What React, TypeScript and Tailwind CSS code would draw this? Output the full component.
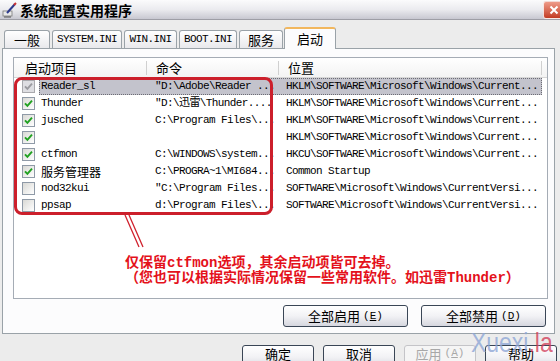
import React from 'react';

type Row = { name: string; cmd: string; loc: string; checked: boolean; selected?: boolean; cjk?: boolean };

const rows: Row[] = [
  { name: 'Reader_sl', cmd: '"D:\\Adobe\\Reader ...', loc: 'HKLM\\SOFTWARE\\Microsoft\\Windows\\Current...', checked: true, selected: true },
  { name: 'Thunder', cmd: '"D:\\迅雷\\Thunder....', loc: 'HKLM\\SOFTWARE\\Microsoft\\Windows\\Current...', checked: true },
  { name: 'jusched', cmd: 'C:\\Program Files\\...', loc: 'HKLM\\SOFTWARE\\Microsoft\\Windows\\Current...', checked: true },
  { name: '', cmd: '', loc: 'HKLM\\SOFTWARE\\Microsoft\\Windows\\Current...', checked: true },
  { name: 'ctfmon', cmd: 'C:\\WINDOWS\\system...', loc: 'HKCU\\SOFTWARE\\Microsoft\\Windows\\Current...', checked: true },
  { name: '服务管理器', cmd: 'C:\\PROGRA~1\\MI684...', loc: 'Common Startup', checked: true, cjk: true },
  { name: 'nod32kui', cmd: '"C:\\Program Files...', loc: 'SOFTWARE\\Microsoft\\Windows\\CurrentVersi...', checked: false },
  { name: 'ppsap', cmd: 'd:\\Program Files\\...', loc: 'SOFTWARE\\Microsoft\\Windows\\CurrentVersi...', checked: false },
];

const mono = "font-['Liberation_Mono','Noto_Sans_CJK_SC',monospace] text-[11px] tracking-[-0.6px]";

function CheckBox({ checked, dim }: { checked: boolean; dim?: boolean }) {
  return (
    <span
      className={`flex items-center justify-center w-[13px] h-[13px] border ${
        dim ? 'border-[#a9a9ad] bg-[#dedee2]' : 'border-[#8f9aa7] bg-linear-to-br from-[#d9d9d5] to-white'
      }`}
    >
      {checked && (
        <svg width="9" height="9" viewBox="0 0 9 9">
          <path d="M1 4.3 L3.4 6.8 L8 1.6" fill="none" stroke={dim ? '#9b9ba0' : '#21a121'} strokeWidth="1.9" />
        </svg>
      )}
    </span>
  );
}

function Tab({ label, width, monoLabel }: { label: string; width: string; monoLabel?: boolean }) {
  return (
    <div
      className={`${width} h-[18px] mr-[2px] flex items-center justify-center rounded-t-[3px] border border-b-0 border-[#9aa2a8] bg-linear-to-b from-white to-[#e9e9ec] ${
        monoLabel ? mono : 'text-[13px]'
      }`}
    >
      {label}
    </div>
  );
}

function Btn({ children, width, disabled, tall }: { children: React.ReactNode; width: string; disabled?: boolean; tall?: boolean }) {
  return (
    <div
      className={`${width} flex justify-center rounded-[3px] border text-[13px] ${
        tall ? 'h-[24px] items-start pt-[1px] leading-[13px]' : 'h-[22px] items-center'
      } ${
        disabled
          ? 'border-[#c4c4c8] bg-[#f5f5f5] text-[#a8a8a8]'
          : 'border-[#3a4656] bg-linear-to-b from-white via-[#f2f2f5] to-[#d6d7df]'
      }`}
    >
      {children}
    </div>
  );
}

function Key({ k }: { k: string }) {
  return (
    <span className="ml-[3px] font-['Liberation_Mono',monospace] text-[11px]">
      (<span className="underline">{k}</span>)
    </span>
  );
}

export default function App() {
  return (
    <div className="relative w-[560px] h-[361px] overflow-hidden bg-[#ececec] font-['Noto_Sans_CJK_SC',sans-serif] text-black">
      {/* title bar */}
      <div className="flex items-center h-[20px] border-b border-[#9e9ea6] bg-linear-to-b from-[#fbfbfc] via-[#ebebef] to-[#c8c8d1]">
        <svg width="16" height="16" viewBox="0 0 16 16" className="ml-[2px]">
          <rect x="1" y="9" width="9" height="5" fill="#e8e8e8" stroke="#7a7a7a" strokeWidth="0.8" />
          <path d="M5 11 L13 2" stroke="#2d3a8c" strokeWidth="2" />
          <path d="M12 3 L14 1" stroke="#c33" strokeWidth="2" />
          <path d="M2 15 L9 15" stroke="#555" strokeWidth="1" />
        </svg>
        <span className="ml-[2px] text-[14px] font-bold leading-none">系统配置实用程序</span>
        <div className="ml-auto mr-[-4px] w-[21px] h-[18px] rounded-[3px] border border-white/80 bg-linear-to-b from-[#ee9a88] to-[#c23a22] flex items-center justify-center">
          <svg width="10" height="10" viewBox="0 0 10 10">
            <path d="M1.5 1.5 L8.5 8.5 M8.5 1.5 L1.5 8.5" stroke="white" strokeWidth="2" />
          </svg>
        </div>
      </div>

      {/* tabs */}
      <div className="flex items-end h-[28px] pl-[4px]">
        <Tab label="一般" width="w-[46px]" />
        <Tab label="SYSTEM.INI" width="w-[70px]" monoLabel />
        <Tab label="WIN.INI" width="w-[53px]" monoLabel />
        <Tab label="BOOT.INI" width="w-[58px]" monoLabel />
        <Tab label="服务" width="w-[44px]" />
        <div className="relative z-10 -ml-[1px] -mb-px w-[52px] h-[22px] flex items-center justify-center rounded-t-[3px] border border-b-0 border-[#9aa2a8] border-t-2 border-t-[#f2b75e] bg-[#fcfcfd] text-[13px]">
          启动
        </div>
      </div>

      {/* tab page */}
      <div className="ml-[2px] w-[553px] h-[286px] border border-[#9aa2a8] bg-[#fcfcfd] pt-[8px] pl-[10px]">
        <div className="w-[535px] h-[242px] border border-[#a5acb5] bg-white">
          {/* header */}
          <div className="flex h-[20px] items-center border-b border-[#d6d6d6] bg-linear-to-b from-white to-[#f3f3f3] text-[13px]">
            <div className="w-[133px] pl-[11px] border-r border-[#d0d0d0] h-[14px] flex items-center">启动项目</div>
            <div className="w-[132px] pl-[9px] border-r border-[#d0d0d0] h-[14px] flex items-center">命令</div>
            <div className="w-[263px] pl-[9px] border-r border-[#d0d0d0] h-[14px] flex items-center">位置</div>
          </div>
          {/* rows */}
          {rows.map((r, i) => (
            <div key={i} className="flex h-[17px] items-center">
              <div className="w-[25px] pl-[8px] flex items-center">
                <CheckBox checked={r.checked} dim={r.selected} />
              </div>
              <div
                className={`flex h-[17px] items-center ${
                  r.selected ? 'bg-[#c3c3cc] outline-1 outline-dotted outline-[#6c6c74] -outline-offset-1' : ''
                }`}
              >
                <div className={`w-[108px] pl-[2px] whitespace-nowrap overflow-hidden ${r.cjk ? 'text-[12px]' : mono}`}>{r.name}</div>
                <div className={`w-[132px] pl-[8px] whitespace-nowrap overflow-hidden ${mono}`}>{r.cmd}</div>
                <div className={`w-[263px] pl-[7px] whitespace-nowrap overflow-hidden ${mono}`}>{r.loc}</div>
              </div>
            </div>
          ))}
        </div>
        <div className="flex justify-end gap-[13px] mt-[6px] pr-[8px]">
          <Btn width="w-[125px]">
            全部启用<Key k="E" />
          </Btn>
          <Btn width="w-[125px]">
            全部禁用<Key k="D" />
          </Btn>
        </div>
      </div>

      {/* dialog buttons */}
      <div className="flex justify-end gap-[9px] mt-[11px] pr-[3px]">
        <Btn width="w-[72px]" tall>确定</Btn>
        <Btn width="w-[72px]" tall>取消</Btn>
        <Btn width="w-[72px]" tall disabled>
          应用<Key k="A" />
        </Btn>
        <Btn width="w-[72px]" tall>帮助</Btn>
      </div>

      {/* red annotation */}
      <div className="absolute left-[14px] top-[77px] w-[259px] h-[138px] rounded-[8px] border-[3px] border-[#cc1f2b]" />
      <svg className="absolute left-[120px] top-[213px]" width="30" height="40" viewBox="0 0 30 40">
        <path d="M5 2 L19 34 M9 2 L23 34" stroke="#d0222e" strokeWidth="1.3" fill="none" />
      </svg>
      <div className="absolute left-[125px] top-[256px] text-[14px] leading-[15px] font-bold text-[#e4111b] font-['Liberation_Mono','Noto_Sans_CJK_SC',monospace] whitespace-nowrap">
        <div>仅保留ctfmon选项，其余启动项皆可去掉。</div>
        <div>（您也可以根据实际情况保留一些常用软件。如迅雷Thunder）</div>
      </div>

      {/* watermark */}
      <div className="absolute left-[471px] top-[329px] origin-left scale-x-[0.82] text-[28px] leading-none font-['Liberation_Sans',sans-serif] whitespace-nowrap">
        <span className="text-[#8ea6d6]/80">Xuexi</span>
        <span className="text-[#d2405a]/80">.la</span>
      </div>
    </div>
  );
}
